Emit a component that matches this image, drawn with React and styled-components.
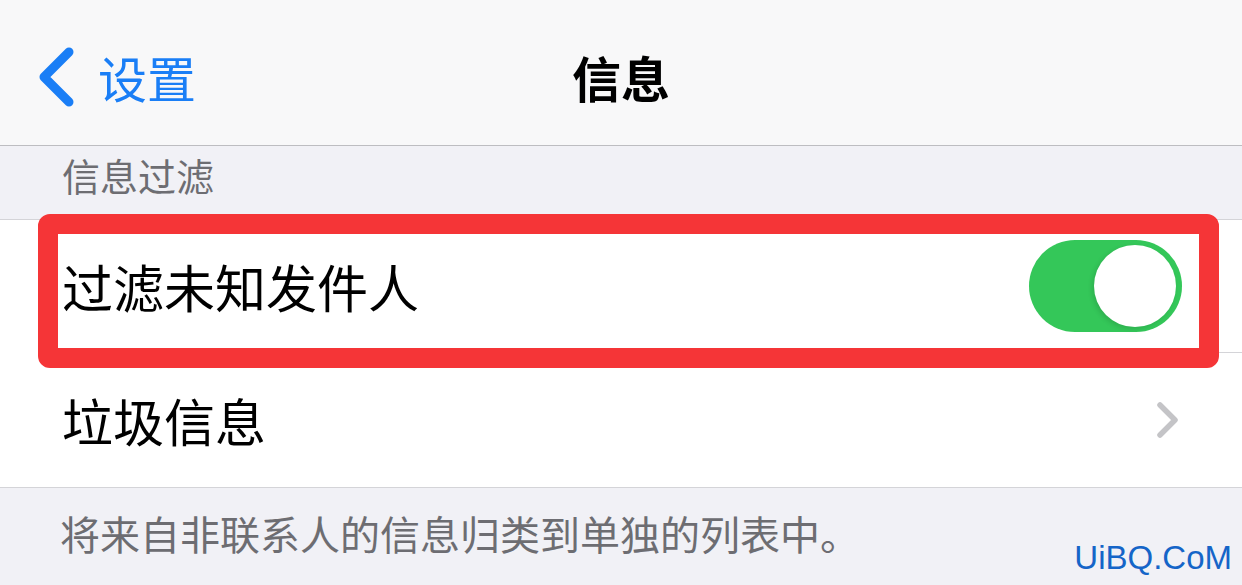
import React from 'react';
import styled, { createGlobalStyle } from 'styled-components';

const GlobalStyle = createGlobalStyle`
  html, body {
    margin: 0;
    padding: 0;
    background: #f1f1f6;
  }
  * {
    box-sizing: border-box;
  }
`;

const Screen = styled.div`
  position: relative;
  width: 1242px;
  height: 585px;
  overflow: hidden;
  background: #f1f1f6;
  font-family: "Noto Sans CJK SC", "Noto Sans", sans-serif;
`;

// --- Navigation bar ---
const NavBar = styled.header`
  display: grid;
  grid-template-columns: 1fr auto 1fr;
  align-items: center;
  height: 146px;
  padding-top: 8px;
  background: #f8f8f9;
  border-bottom: 1px solid #bdbdc1;
`;

const BackButton = styled.div`
  display: flex;
  align-items: center;
  gap: 24px;
  padding-left: 38px;
  color: #1a7ef6;
  font-size: 49px;
  line-height: 1;
`;

const NavTitle = styled.h1`
  margin: 0;
  font-size: 49px;
  font-weight: 700;
  color: #000;
  line-height: 1;
`;

// --- Grouped list ---
const SectionHeader = styled.div`
  height: 73px;
  padding: 10px 0 0 62px;
  font-size: 38px;
  line-height: 38px;
  color: #6d6d72;
`;

const Group = styled.div`
  background: #fff;
  border-top: 1px solid #d4d4d8;
  border-bottom: 1px solid #d4d4d8;
`;

const Row = styled.div`
  padding-left: 62px;
`;

const RowInner = styled.div`
  display: flex;
  align-items: center;
  justify-content: space-between;
  height: ${p => (p.$last ? 134 : 133)}px;
  padding-right: ${p => p.$pr}px;
  border-bottom: ${p => (p.$last ? 'none' : '1px solid #d4d4d8')};
`;

const RowLabel = styled.span`
  font-size: 51px;
  line-height: 1;
  color: #000;
`;

const Switch = styled.div`
  position: relative;
  width: 153px;
  height: 92px;
  border-radius: 46px;
  background: #34c759;
`;

const Knob = styled.div`
  position: absolute;
  top: 5px;
  right: 6px;
  width: 82px;
  height: 82px;
  border-radius: 50%;
  background: #fff;
  box-shadow: -2px 2px 5px rgba(0, 0, 0, 0.12);
`;

const Footer = styled.div`
  padding: 25px 0 0 60px;
  font-size: 40px;
  line-height: 40px;
  color: #6d6d72;
`;

// --- Overlays ---
const Highlight = styled.div`
  position: absolute;
  left: 38px;
  top: 214px;
  width: 1181px;
  height: 154px;
  border: 20px solid #f53537;
  border-radius: 12px;
`;

const Watermark = styled.div`
  position: absolute;
  right: 10px;
  bottom: 8px;
  font-family: "Liberation Sans", Arial, sans-serif;
  font-size: 33px;
  color: #1565c8;
`;

const BackChevron = () => (
  <svg width="36" height="60" viewBox="0 0 36 60">
    <path d="M31 5 L6 30 L31 55" fill="none" stroke="#1a7ef6" strokeWidth="9" strokeLinecap="round" strokeLinejoin="round" />
  </svg>
);

const Disclosure = () => (
  <svg width="22" height="36" viewBox="0 0 22 36">
    <path d="M3 3 L18 18 L3 33" fill="none" stroke="#c4c4c7" strokeWidth="5.5" strokeLinecap="round" strokeLinejoin="round" />
  </svg>
);

const App = () => (
  <Screen>
    <GlobalStyle />
    <NavBar>
      <BackButton>
        <BackChevron />
        <span>设置</span>
      </BackButton>
      <NavTitle>信息</NavTitle>
      <div />
    </NavBar>

    <SectionHeader>信息过滤</SectionHeader>
    <Group>
      <Row>
        <RowInner $pr={60}>
          <RowLabel>过滤未知发件人</RowLabel>
          <Switch>
            <Knob />
          </Switch>
        </RowInner>
      </Row>
      <Row>
        <RowInner $pr={63} $last>
          <RowLabel>垃圾信息</RowLabel>
          <Disclosure />
        </RowInner>
      </Row>
    </Group>
    <Footer>将来自非联系人的信息归类到单独的列表中。</Footer>

    <Highlight />
    <Watermark>UiBQ.CoM</Watermark>
  </Screen>
);

export default App;
